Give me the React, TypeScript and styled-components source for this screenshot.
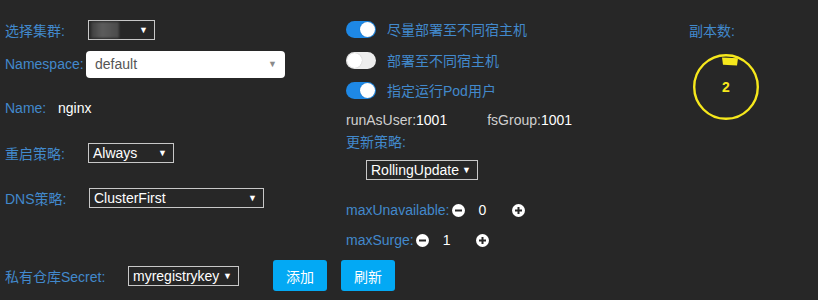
import React from 'react';
import styled, { createGlobalStyle } from 'styled-components';

const GlobalStyle = createGlobalStyle`
  html, body {
    margin: 0;
    padding: 0;
    background: #272727;
  }
  body {
    font-family: "Liberation Sans", Arial, "Noto Sans CJK SC", sans-serif;
    font-size: 14px;
    color: #fff;
  }
`;

const Page = styled.div`
  width: 818px;
  height: 300px;
  background: #272727;
  overflow: hidden;
`;

const Top = styled.div`
  display: grid;
  grid-template-columns: 341px 343px 1fr;
  padding-left: 5px;
`;

const Column = styled.div`
  display: flex;
  flex-direction: column;
`;

const Row = styled.div<{ $top: number; $h?: number; $indent?: number }>`
  display: flex;
  align-items: center;
  margin-top: ${(p) => p.$top}px;
  height: ${(p) => p.$h ?? 24}px;
  padding-left: ${(p) => p.$indent ?? 0}px;
`;

const Label = styled.span<{ $w?: number }>`
  color: #4289cc;
  white-space: nowrap;
  flex: none;
  width: ${(p) => (p.$w ? `${p.$w}px` : 'auto')};
`;

const Value = styled.span`
  color: #fff;
`;

const Muted = styled.span`
  color: #cfcfcf;
`;

const Select = styled.div<{ $w: number }>`
  box-sizing: border-box;
  width: ${(p) => p.$w}px;
  height: 20px;
  border: 1px solid #c8c8c8;
  display: flex;
  align-items: center;
  padding: 0 4px;
  color: #fff;
  white-space: nowrap;
`;

const SelectText = styled.span`
  flex: 1;
`;

const Caret = styled.span<{ $dark?: boolean }>`
  font-size: 9px;
  color: ${(p) => (p.$dark ? '#8a8a8a' : '#fff')};
  margin-right: 2px;
`;

const WhiteSelect = styled.div`
  box-sizing: border-box;
  width: 199px;
  height: 27px;
  background: #fff;
  border-radius: 4px;
  display: flex;
  align-items: center;
  padding: 0 6px 0 9px;
  color: #555;
`;

const Blurred = styled.div`
  width: 28px;
  height: 16px;
  margin-left: -2px;
  background: linear-gradient(90deg, #3e3e3e, #5d5d5d 40%, #4a4a4a);
  filter: blur(1px);
`;

const Switch = styled.span<{ $on: boolean }>`
  position: relative;
  flex: none;
  width: 30px;
  height: 17px;
  border-radius: 9px;
  background: ${(p) => (p.$on ? '#1e88e5' : '#ededed')};
  margin-right: 11px;

  &::after {
    content: '';
    position: absolute;
    top: 1px;
    left: ${(p) => (p.$on ? '14px' : '1px')};
    width: 15px;
    height: 15px;
    border-radius: 50%;
    background: #fff;
    box-shadow: 0 0 1px rgba(0, 0, 0, 0.3);
  }
`;

const Spacer = styled.span<{ $w: number }>`
  display: inline-block;
  width: ${(p) => p.$w}px;
`;

const StepValue = styled.span`
  box-sizing: border-box;
  width: 47px;
  padding-left: 14px;
  color: #fff;
`;

const IconBtn = styled.span`
  display: inline-flex;
  width: 13px;
  height: 13px;
`;

const Button = styled.button`
  width: 54px;
  height: 31px;
  border: none;
  border-radius: 3px;
  background: #03a9f4;
  color: #fff;
  font: inherit;
  font-size: 14px;
  padding: 0;
`;

const Bottom = styled.div`
  display: flex;
  align-items: center;
  margin-top: 10px;
  padding-left: 5px;
  height: 31px;
`;

const Dial = styled.div`
  position: relative;
  width: 66px;
  height: 66px;
  margin: 14px 0 0 4px;
`;

const DialValue = styled.span`
  position: absolute;
  inset: 0;
  display: flex;
  align-items: center;
  justify-content: center;
  color: #f6e81c;
  font-weight: bold;
  font-size: 14px;
`;

const Minus = () => (
  <IconBtn>
    <svg width="13" height="13" viewBox="0 0 13 13">
      <circle cx="6.5" cy="6.5" r="6.5" fill="#fff" />
      <rect x="3" y="5.5" width="7" height="2" fill="#272727" />
    </svg>
  </IconBtn>
);

const Plus = () => (
  <IconBtn>
    <svg width="13" height="13" viewBox="0 0 13 13">
      <circle cx="6.5" cy="6.5" r="6.5" fill="#fff" />
      <rect x="3" y="5.5" width="7" height="2" fill="#272727" />
      <rect x="5.5" y="3" width="2" height="7" fill="#272727" />
    </svg>
  </IconBtn>
);

const App: React.FC = () => {
  return (
    <Page>
      <GlobalStyle />
      <Top>
        <Column>
          <Row $top={18}>
            <Label $w={83}>选择集群:</Label>
            <Select $w={67}>
              <Blurred />
              <SelectText />
              <Caret>▼</Caret>
            </Select>
          </Row>
          <Row $top={8} $h={28}>
            <Label $w={81}>Namespace:</Label>
            <WhiteSelect>
              <SelectText>default</SelectText>
              <Caret $dark>▼</Caret>
            </WhiteSelect>
          </Row>
          <Row $top={18}>
            <Label $w={53}>Name:</Label>
            <Value>nginx</Value>
          </Row>
          <Row $top={21}>
            <Label $w={83}>重启策略:</Label>
            <Select $w={86}>
              <SelectText>Always</SelectText>
              <Caret>▼</Caret>
            </Select>
          </Row>
          <Row $top={21}>
            <Label $w={84}>DNS策略:</Label>
            <Select $w={175}>
              <SelectText>ClusterFirst</SelectText>
              <Caret>▼</Caret>
            </Select>
          </Row>
        </Column>

        <Column>
          <Row $top={17}>
            <Switch $on />
            <Label>尽量部署至不同宿主机</Label>
          </Row>
          <Row $top={7}>
            <Switch $on={false} />
            <Label>部署至不同宿主机</Label>
          </Row>
          <Row $top={6}>
            <Switch $on />
            <Label>指定运行Pod用户</Label>
          </Row>
          <Row $top={8} $h={20}>
            <Muted>runAsUser:</Muted>
            <Value>1001</Value>
            <Spacer $w={40} />
            <Muted>fsGroup:</Muted>
            <Value>1001</Value>
          </Row>
          <Row $top={1} $h={20}>
            <Label>更新策略:</Label>
          </Row>
          <Row $top={9} $h={20} $indent={20}>
            <Select $w={112}>
              <SelectText>RollingUpdate</SelectText>
              <Caret>▼</Caret>
            </Select>
          </Row>
          <Row $top={20} $h={20}>
            <Label>maxUnavailable:</Label>
            <Spacer $w={2} />
            <Minus />
            <StepValue>0</StepValue>
            <Plus />
          </Row>
          <Row $top={10} $h={20}>
            <Label>maxSurge:</Label>
            <Spacer $w={2} />
            <Minus />
            <StepValue>1</StepValue>
            <Plus />
          </Row>
        </Column>

        <Column>
          <Row $top={20} $h={20}>
            <Label>副本数:</Label>
          </Row>
          <Dial>
            <svg width="66" height="66" viewBox="0 0 66 66">
              <circle cx="33" cy="33" r="31.8" fill="none" stroke="#f6e81c" strokeWidth="2.4" />
              <polygon points="29,3.4 45,4.2 44,11.4 30,10.8" fill="#f6e81c" />
            </svg>
            <DialValue>2</DialValue>
          </Dial>
        </Column>
      </Top>

      <Bottom>
        <Label $w={123}>私有仓库Secret:</Label>
        <Select $w={111}>
          <SelectText>myregistrykey</SelectText>
          <Caret>▼</Caret>
        </Select>
        <Spacer $w={34} />
        <Button>添加</Button>
        <Spacer $w={14} />
        <Button>刷新</Button>
      </Bottom>
    </Page>
  );
};

export default App;
